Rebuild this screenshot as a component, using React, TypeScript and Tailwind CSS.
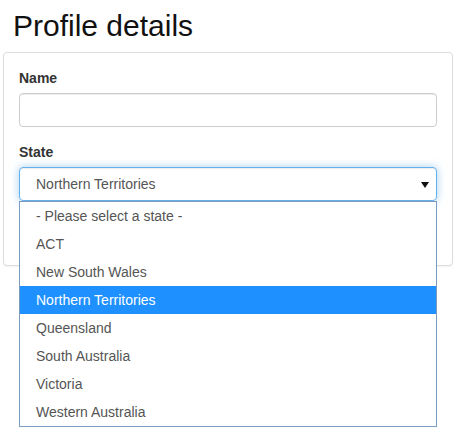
const states = [
  '- Please select a state -',
  'ACT',
  'New South Wales',
  'Northern Territories',
  'Queensland',
  'South Australia',
  'Victoria',
  'Western Australia',
];

export default function App() {
  const selected = 'Northern Territories';
  return (
    <div className="min-h-[436px] bg-white font-['Liberation_Sans',Arial,sans-serif] text-[14px] text-[#333]">
      <h2 className="px-[13px] pt-[9px] mb-[10px] text-[30px] leading-[33px] font-normal text-[#111]">Profile details</h2>

      {/* Panel */}
      <div className="ml-[3px] w-[450px] rounded-[4px] border border-[#ddd] bg-white p-[15px] shadow-[0_1px_1px_rgba(0,0,0,0.05)]">
        <div className="mb-[15px]">
          <label className="mb-[5px] block font-bold leading-[20px] text-[#333]">Name</label>
          <input
            type="text"
            className="block h-[34px] w-full rounded-[4px] border border-[#ccc] px-[12px] shadow-[inset_0_1px_1px_rgba(0,0,0,0.075)] outline-none"
          />
        </div>

        <div className="mb-[15px]">
          <label className="mb-[5px] block font-bold leading-[20px] text-[#333]">State</label>
          <div className="relative">
            <div className="flex h-[34px] w-full items-center justify-between rounded-[4px] border border-[#66afe9] pl-[16px] pr-[7px] text-[#555] shadow-[inset_0_1px_1px_rgba(0,0,0,0.075),0_0_8px_rgba(102,175,233,0.6)]">
              <span>{selected}</span>
              <svg width="8" height="6" viewBox="0 0 8 6" className="mt-[1px]">
                <path d="M0 0h8L4 6z" fill="#111" />
              </svg>
            </div>

            {/* Open dropdown list */}
            <ul className="absolute left-0 top-[34px] z-10 w-[418px] border border-[#7a9cc0] bg-white">
              {states.map((s) => (
                <li
                  key={s}
                  className={
                    s === selected
                      ? 'flex h-[28px] items-center bg-[#1e90ff] pl-[16px] text-white'
                      : 'flex h-[28px] items-center pl-[16px] text-[#555]'
                  }
                >
                  {s}
                </li>
              ))}
            </ul>
          </div>
        </div>

        <div className="h-[34px]"></div>
      </div>
    </div>
  );
}
